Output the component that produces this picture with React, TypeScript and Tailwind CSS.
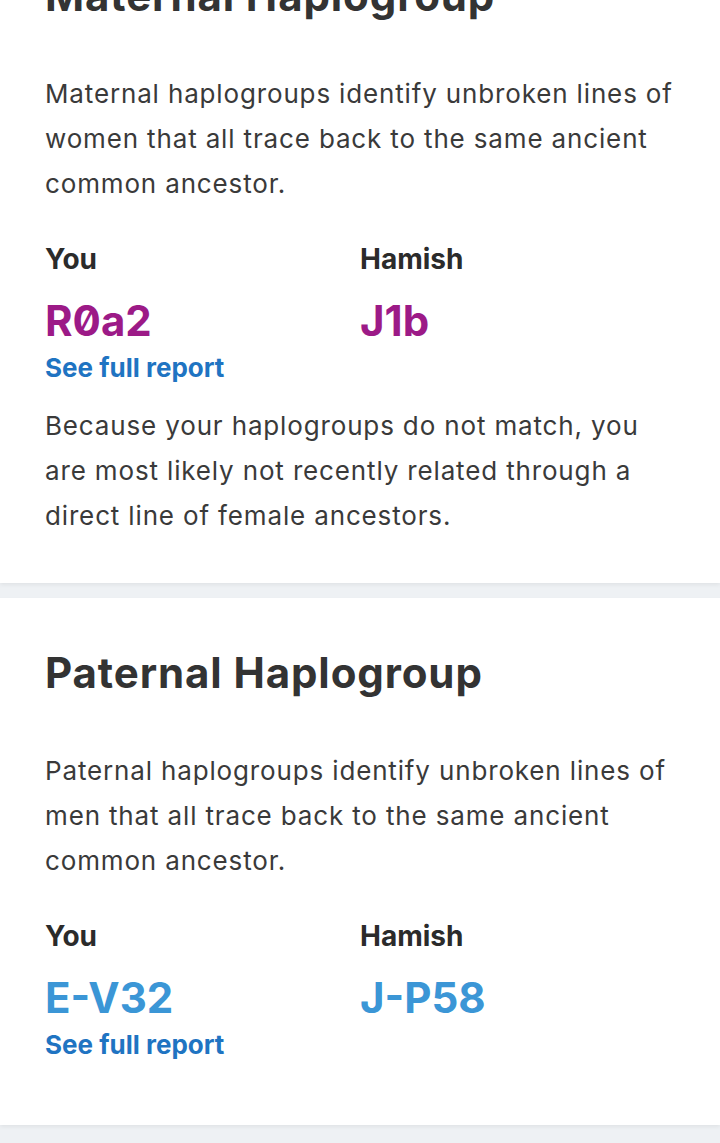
import React from "react";

type Person = { name: string; value: string; link?: boolean };

type Section = {
  title: string;
  intro: string;
  people: Person[];
  tone: "maternal" | "paternal";
  note?: string;
};

const sections: Section[] = [
  {
    title: "Maternal Haplogroup",
    intro:
      "Maternal haplogroups identify unbroken lines of women that all trace back to the same ancient common ancestor.",
    people: [
      { name: "You", value: "R0a2", link: true },
      { name: "Hamish", value: "J1b" },
    ],
    tone: "maternal",
    note: "Because your haplogroups do not match, you are most likely not recently related through a direct line of female ancestors.",
  },
  {
    title: "Paternal Haplogroup",
    intro:
      "Paternal haplogroups identify unbroken lines of men that all trace back to the same ancient common ancestor.",
    people: [
      { name: "You", value: "E-V32", link: true },
      { name: "Hamish", value: "J-P58" },
    ],
    tone: "paternal",
  },
];

const HaploCard = ({ section, first }: { section: Section; first: boolean }) => {
  return (
    <div
      className={
        "bg-white px-[45px] pt-[51px] shadow-[0_2px_4px_rgba(0,0,0,0.06)] " +
        (first ? "-mt-[79px] pb-[45px]" : "mt-[15px] pb-[64px]")
      }
    >
      <h2 className="text-[42px] leading-[48px] font-bold text-[#333333] tracking-[0.9px]">
        {section.title}
      </h2>
      <p className="mt-[51px] text-[26px] leading-[45px] tracking-[0.85px] text-[#3a3a3a]">
        {section.intro}
      </p>
      <div className="grid grid-cols-2 mt-[37px]">
        {section.people.map((p) => (
          <div key={p.name}>
            <div className="text-[28px] leading-[32px] font-bold text-[#2b2b2b]">{p.name}</div>
            <div
              className={
                "mt-[22px] text-[42px] leading-[48px] font-bold [font-feature-settings:'zero'] " +
                (section.tone === "maternal" ? "text-[#9c1a87]" : "text-[#3b96d6]")
              }
            >
              {p.value}
            </div>
            {p.link && (
              <a href="#" className="block mt-[7px] text-[26px] leading-[32px] font-bold text-[#1f74c2]">
                See full report
              </a>
            )}
          </div>
        ))}
      </div>
      {section.note && (
        <p className="mt-[19px] text-[26px] leading-[45px] tracking-[0.85px] text-[#3a3a3a]">
          {section.note}
        </p>
      )}
    </div>
  );
};

const App = () => {
  return (
    <div className="min-h-[1143px] bg-[#eef1f4] overflow-hidden font-['Inter',sans-serif]">
      {sections.map((s, i) => (
        <HaploCard key={s.title} section={s} first={i === 0} />
      ))}
    </div>
  );
};

export default App;
